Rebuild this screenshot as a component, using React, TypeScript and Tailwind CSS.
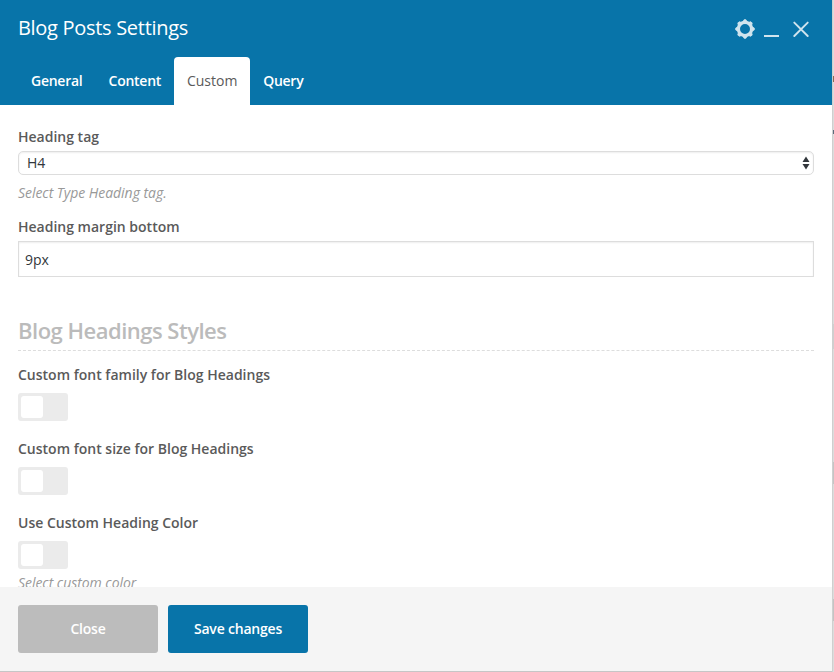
const TABS = ['General', 'Content', 'Custom', 'Query'];

function Gear() {
  return (
    <svg width="20" height="20" viewBox="0 0 20 20" fill="none" stroke="#d0e4ee" className="block">
      <circle cx="10" cy="10" r="6.6" strokeWidth="3.2" />
      {[0, 45, 90, 135, 180, 225, 270, 315].map((a) => (
        <path
          key={a}
          d="M7.9 2.7 L9.1 0.7 H10.9 L12.1 2.7 Z"
          fill="#d0e4ee"
          strokeWidth="0.8"
          strokeLinejoin="round"
          transform={`rotate(${a} 10 10)`}
        />
      ))}
    </svg>
  );
}

function Toggle() {
  return (
    <div className="h-7 w-[50px] rounded-[3px] bg-[#ebebeb] p-[3px]">
      <div className="h-[22px] w-[22px] rounded-[3px] bg-white" />
    </div>
  );
}

function Label({ children }: { children: string }) {
  return <div className="h-5 text-sm leading-5 font-semibold whitespace-nowrap">{children}</div>;
}

export default function App() {
  return (
    <div className="flex h-[672px] w-[834px] overflow-hidden bg-[#c6c6c6] font-['Open_Sans',sans-serif] text-[#5a5a5a]">
      <div className="flex h-[671px] w-[832px] shrink-0 flex-col bg-white">
        <header className="flex h-[105px] shrink-0 flex-col justify-between bg-[#0874a9]">
          <div className="flex items-start justify-between pr-[23px] pl-[18px]">
            <h1 className="mt-[14px] text-[20px] leading-7 tracking-[-0.3px] text-white">Blog Posts Settings</h1>
            <div className="mt-[19px] flex">
              <Gear />
              <svg width="15" height="20" viewBox="0 0 15 20" className="ml-[9px] block">
                <path d="M0 17H15" stroke="#d0e4ee" strokeWidth="2" />
              </svg>
              <svg width="16" height="20" viewBox="0 0 16 20" className="ml-[14px] block">
                <path d="M1.3 3.6L14.7 17M14.7 3.6L1.3 17" stroke="#d0e4ee" strokeWidth="1.9" strokeLinecap="round" />
              </svg>
            </div>
          </div>
          <nav className="flex h-12 pl-[18px]">
            {TABS.map((tab) =>
              tab === 'Custom' ? (
                <div key={tab} className="w-[76px] rounded-t-[4px] bg-white text-center text-sm leading-[47px]">
                  {tab}
                </div>
              ) : (
                <div key={tab} className="px-[13px] text-sm leading-[47px] font-semibold tracking-[-0.25px] text-white">
                  {tab}
                </div>
              ),
            )}
          </nav>
        </header>

        <main className="h-[482px] shrink-0 overflow-hidden px-[18px] pt-[22px]">
          <Label>Heading tag</Label>
          <div className="mt-1 flex h-6 items-center justify-between rounded-[5px] border border-[#ddd] pr-[3px] pl-2 text-sm text-[#32373c] shadow-[inset_0_1px_2px_rgba(0,0,0,0.07)]">
            <span className="leading-5">H4</span>
            <svg width="8" height="14" viewBox="0 0 8 14" fill="#32373c">
              <path d="M4 .6L7.5 6H.5ZM4 13.4L7.5 8H.5Z" />
            </svg>
          </div>
          <div className="mt-2 h-5 text-[14px] leading-5 tracking-[-0.04px] text-[#999] italic">Select Type Heading tag.</div>
          <div className="mt-[14px]">
            <Label>Heading margin bottom</Label>
          </div>
          <div className="mt-1 h-9 border border-[#ddd] px-[6px] text-sm leading-[35px] text-[#32373c] shadow-[inset_0_1px_2px_rgba(0,0,0,0.07)]">
            9px
          </div>
          <h2 className="mt-[38px] h-9 border-b border-dashed border-[#ddd] text-[22px] leading-[31px] font-semibold tracking-[-0.5px] text-[#bbb]">
            Blog Headings Styles
          </h2>
          <div className="mt-[14px] flex flex-col gap-[18px]">
            {['Custom font family for Blog Headings', 'Custom font size for Blog Headings', 'Use Custom Heading Color'].map(
              (label) => (
                <div key={label} className="flex flex-col gap-2">
                  <Label>{label}</Label>
                  <Toggle />
                </div>
              ),
            )}
          </div>
          <div className="mt-1 h-5 text-[14px] leading-5 tracking-[-0.04px] text-[#999] italic">Select custom color</div>
        </main>

        <footer className="flex h-[84px] shrink-0 gap-[10px] bg-[#f5f5f5] px-[18px] pt-[18px] text-sm font-semibold tracking-[-0.2px] text-white">
          <button className="h-12 w-[140px] rounded-[3px] bg-[#bcbcbc]">Close</button>
          <button className="h-12 w-[140px] rounded-[3px] bg-[#0874a9]">Save changes</button>
        </footer>
      </div>
      <div className="flex w-[2px] shrink-0 flex-col border-l border-[#cfcfcf] bg-[#dcdcdc]">
        <div className="mt-[76px] h-[6px] bg-[#8a6a55]" />
        <div className="mt-[48px] h-1 bg-[#5b6b7c]" />
        <div className="mt-[190px] h-[25px] bg-[#cfcfcf]" />
        <div className="mt-[113px] h-[22px] bg-[#c5c5c5]" />
        <div className="mt-[115px] h-[22px] bg-[#c4c4c4]" />
      </div>
    </div>
  );
}
